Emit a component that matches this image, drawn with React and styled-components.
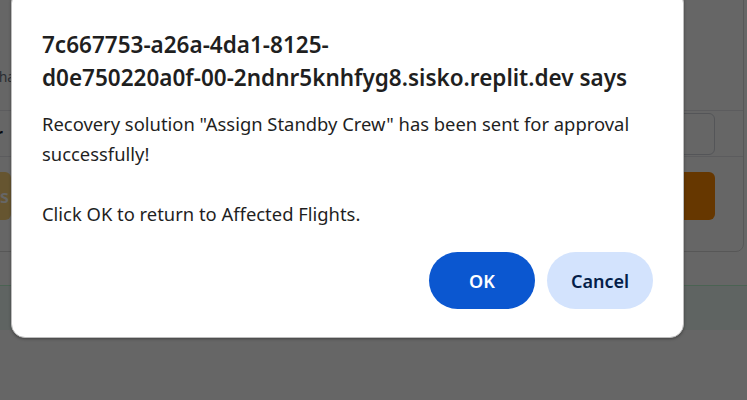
import React from 'react';
import styled, { createGlobalStyle } from 'styled-components';

const GlobalStyle = createGlobalStyle`
    html, body {
        margin: 0;
        padding: 0;
        width: 747px;
        height: 400px;
        overflow: hidden;
        background: #ffffff;
        font-family: 'Noto Sans', 'Open Sans', sans-serif;
    }
`

const Page = styled.div`
    position: relative;
    width: 747px;
    height: 400px;
    overflow: hidden;
`

const Card = styled.div`
    display: flex;
    flex-direction: column;
    margin-left: -40px;
    margin-top: -10px;
    width: 784px;
    height: 262px;
    box-sizing: border-box;
    border: 1px solid #d9d9d9;
    border-radius: 8px;
    background: white;
`

const SubTitle = styled.div`
    padding: 76px 0 0 30px;
    height: 43px;
    font-size: 14px;
    color: #6b7280;
    white-space: nowrap;
`

const Divider = styled.div`
    height: 1px;
    background: #e5e7eb;
`

const FormRow = styled.div`
    display: flex;
    align-items: center;
    justify-content: space-between;
    height: 45px;
    padding: 0 28px 0 16px;
    border-bottom: 1px solid #e5e7eb;
`

const Label = styled.div`
    font-weight: 700;
    font-size: 16px;
    color: #111827;
    white-space: nowrap;
`

const Input = styled.div`
    width: 220px;
    height: 42px;
    box-sizing: border-box;
    border: 1px solid #d1d5db;
    border-radius: 6px;
`

const ActionRow = styled.div`
    display: flex;
    justify-content: space-between;
    padding: 15px 28px 0 0;
`

const ActionButton = styled.div`
    display: flex;
    align-items: center;
    justify-content: flex-end;
    height: 48px;
    padding: 0 2px 0 0;
    border-radius: 6px;
    background: ${p => p.primary ? '#ff8a00' : '#ffd478'};
    color: #ffffff;
    font-size: 18px;
    font-weight: 600;
    width: ${p => p.primary ? '200px' : '48px'};
`

const Notice = styled.div`
    margin-top: 33px;
    height: 44px;
    border-top: 1px solid #bbf7d0;
    background: #eef9f4;
`

const Overlay = styled.div`
    position: absolute;
    inset: 0;
    background: rgba(0, 0, 0, 0.6);
`

const Dialog = styled.div`
    position: absolute;
    left: 11px;
    top: -11px;
    width: 673px;
    box-sizing: border-box;
    padding: 38px 30px 28px 30px;
    background: #ffffff;
    border: 1px solid #bdbdbd;
    border-radius: 14px;
    box-shadow: 0 1px 3px rgba(0, 0, 0, 0.35);
    display: flex;
    flex-direction: column;
`

const Title = styled.div`
    font-size: 22.5px;
    font-weight: 600;
    line-height: 33px;
    color: #1f1f1f;
    white-space: nowrap;
`

const Message = styled.div`
    margin-top: 15px;
    font-size: 18.4px;
    line-height: 30px;
    color: #1f1f1f;
    white-space: pre-line;
`

const Buttons = styled.div`
    display: flex;
    justify-content: flex-end;
    gap: 12px;
    margin-top: 23px;
`

const DialogButton = styled.button`
    width: 106px;
    height: 57px;
    padding: 0;
    border: none;
    border-radius: 29px;
    font-family: 'Noto Sans', 'Open Sans', sans-serif;
    font-size: 18px;
    font-weight: 600;
    background: ${p => p.primary ? '#0b57d0' : '#d3e3fd'};
    color: ${p => p.primary ? '#ffffff' : '#041e49'};
    cursor: pointer;
`

export default function App() {
    return <>
        <GlobalStyle />
        <Page>
            <Card>
                <SubTitle>Share</SubTitle>
                <Divider />
                <FormRow>
                    <Label>For</Label>
                    <Input />
                </FormRow>
                <ActionRow>
                    <ActionButton>es</ActionButton>
                    <ActionButton primary />
                </ActionRow>
            </Card>
            <Notice />
            <Overlay />
            <Dialog>
                <Title>
                    7c667753-a26a-4da1-8125-<br />
                    d0e750220a0f-00-2ndnr5knhfyg8.sisko.replit.dev says
                </Title>
                <Message>
                    {'Recovery solution "Assign Standby Crew" has been sent for approval\nsuccessfully!\n\nClick OK to return to Affected Flights.'}
                </Message>
                <Buttons>
                    <DialogButton primary>OK</DialogButton>
                    <DialogButton>Cancel</DialogButton>
                </Buttons>
            </Dialog>
        </Page>
    </>
}
